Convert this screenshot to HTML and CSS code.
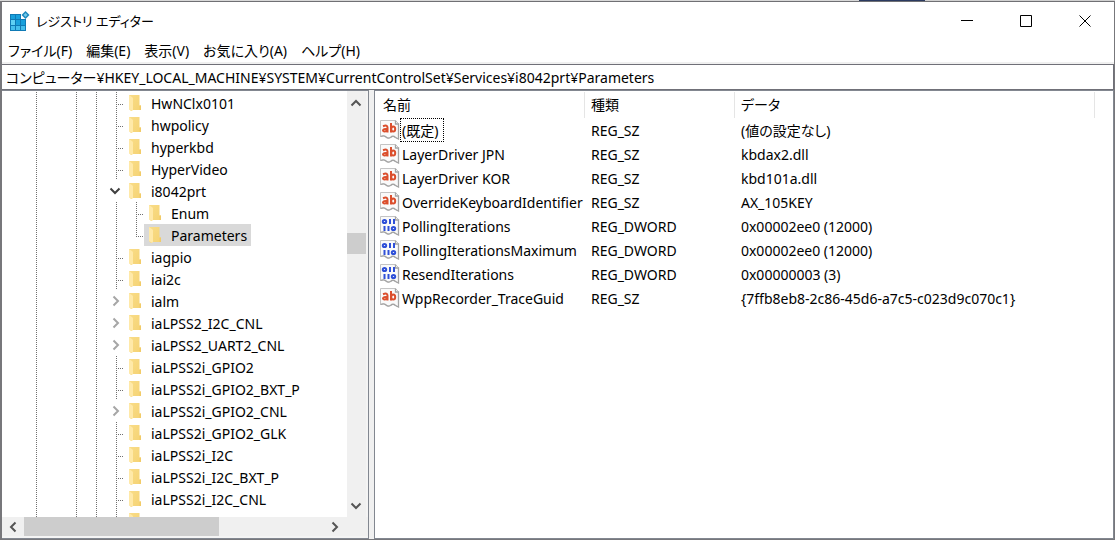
FILE: index.html
```html
<!DOCTYPE html>
<html lang="ja">
<head>
<meta charset="utf-8">
<title>レジストリ エディター</title>
<link rel="stylesheet" href="styles.css">
</head>
<body>
<svg class="defs" aria-hidden="true">
  <defs>
    <linearGradient id="gold" x1="0" y1="0" x2="1" y2="1">
      <stop offset="0" stop-color="#f9dc87"/><stop offset="1" stop-color="#f5d374"/>
    </linearGradient>
    <symbol id="folder" viewBox="0 0 12 16">
      <path d="M0 0H10.500V10.500H12V15H3V16H2L0 14z" fill="url(#gold)"/>
      <path d="M10.500 10.500H12V15H10.500z" fill="#f2cb68"/>
      <path d="M0 0L3.500 2.500Q4 3 4 3.500V15L3 16L0 14z" fill="#ffe9a8"/>
    </symbol>
    <symbol id="page" viewBox="0 0 20 20">
      <path d="M.5 .5H15.500L18.500 3.500V19L15.500 17.500Q13 15 10.500 17.500Q8 19 6 17Q4 15 .5 16.500z" fill="#fafafa" stroke="#c4c4c4"/>
      <path d="M15.500 .5V4H18.500V19L15.500 17.500Q13 15 10.500 17.500Q8 19 6 17Q4 15 .5 16.500" fill="none" stroke="#a4a4a4" stroke-width="1.300"/>
    </symbol>
    <symbol id="string" viewBox="0 0 20 20">
      <use href="#page"/>
      <g fill="none" stroke="#db4f2d" stroke-width="2">
        <path d="M3 6.200Q7.500 4.500 7.500 7.500V12.500M7.500 9Q3 8.500 3 10.500Q3.500 12.500 7.500 10.500"/>
        <path d="M11 3V12.500"/><ellipse cx="13.200" cy="9" rx="2" ry="2.500"/>
      </g>
    </symbol>
    <symbol id="binary" viewBox="0 0 20 20">
      <use href="#page"/>
      <g fill="none" stroke="#2f50d8" stroke-width="2">
        <ellipse cx="4.500" cy="5.500" rx="1.700" ry="1.600"/><path d="M10 3V8M14 3V8M4.500 10V15M8.500 10V15"/>
        <ellipse cx="13.500" cy="12.500" rx="1.700" ry="1.600"/>
      </g>
    </symbol>
    <symbol id="up" viewBox="0 0 12 12"><path d="M1.500 8.500L6 4L10.500 8.500" fill="none" stroke="#555" stroke-width="2"/></symbol>
    <symbol id="down" viewBox="0 0 12 12"><path d="M1.500 3.500L6 8L10.500 3.500" fill="none" stroke="currentColor" stroke-width="2"/></symbol>
    <symbol id="left" viewBox="0 0 12 12"><path d="M8.500 1.500L4 6L8.500 10.500" fill="none" stroke="#555" stroke-width="2"/></symbol>
    <symbol id="right" viewBox="0 0 12 12"><path d="M3.500 1.500L8 6L3.500 10.500" fill="none" stroke="currentColor" stroke-width="2"/></symbol>
  </defs>
</svg>
<main class="window">
  <header class="titlebar">
    <svg class="app-icon" viewBox="0 0 20 20" aria-hidden="true">
      <path d="M0 3H11V8H16V20H0z" fill="#0f7ab5"/>
      <path d="M1 4H5V8H1zM6 4H10V8H6zM6 9H10V14H6zM11 9H15V14H11z" fill="#18a0dc"/>
      <path d="M1 9H5V14H1z" fill="#5fd0f3"/>
      <path d="M1 15H5V19H1zM6 15H10V19H6zM11 15H15V19H11z" fill="#45bfec"/>
      <path d="M15.500 0L19.500 4L15.500 8L11.500 4z" fill="#1b87bd"/>
      <path d="M15.500 2L17.500 4L15.500 6L13.500 4z" fill="#72c9ea"/>
    </svg>
    <h1 class="title">レジストリ エディター</h1>
    <div class="caption-buttons">
      <button class="caption" aria-label="最小化"><svg viewBox="0 0 12 12"><path d="M0 5.500H12"/></svg></button>
      <button class="caption" aria-label="最大化"><svg viewBox="0 0 12 12"><path d="M.5 .5H11.500V11.500H.5z"/></svg></button>
      <button class="caption" aria-label="閉じる"><svg viewBox="0 0 12 12"><path d="M.5 .5L11.500 11.500M11.500 .5L.5 11.500"/></svg></button>
    </div>
  </header>
  <nav class="menubar">
    <button>ファイル(F)</button><button>編集(E)</button><button>表示(V)</button><button>お気に入り(A)</button><button>ヘルプ(H)</button>
  </nav>
  <input class="address" aria-label="アドレス" value="コンピューター¥HKEY_LOCAL_MACHINE¥SYSTEM¥CurrentControlSet¥Services¥i8042prt¥Parameters">
  <div class="panes">
    <section class="tree-pane">
      <div class="tree-main">
        <ul class="tree" id="tree" role="tree" aria-label="キー"></ul>
        <div class="scroll-v">
          <button aria-label="上へ"><svg><use href="#up"/></svg></button>
          <div class="track-v"><div class="thumb-v"></div></div>
          <button aria-label="下へ"><svg><use href="#down"/></svg></button>
        </div>
      </div>
      <div class="scroll-h">
        <button aria-label="左へ"><svg><use href="#left"/></svg></button>
        <div class="track-h"><div class="thumb-h"></div></div>
        <button aria-label="右へ"><svg><use href="#right"/></svg></button>
      </div>
    </section>
    <section class="list-pane">
      <table class="values">
        <colgroup><col class="col-name"><col class="col-type"><col class="col-data"><col></colgroup>
        <thead><tr><th>名前</th><th>種類</th><th>データ</th><td></td></tr></thead>
        <tbody id="values"></tbody>
      </table>
    </section>
  </div>
</main>
<script src="app.js"></script>
</body>
</html>
```
FILE: styles.css
```css
* { box-sizing: border-box; }
body {
  margin: 0;
  height: 100vh;
  padding: 1px 1px 1px 2px;
  background: linear-gradient(90deg, #d8d8d8 77%, #2b3a60 77% 83%, #d0d0d0 83%) top / 100% 1px no-repeat, #77777b;
  color: #000;
  font: 14px/22px "Noto Sans", "Noto Sans CJK JP", sans-serif;
  font-feature-settings: "palt";
  overflow: hidden;
}
button, input { font: inherit; font-feature-settings: inherit; color: inherit; border: 0; padding: 0; background: none; }
.defs { position: absolute; width: 0; height: 0; }
.window {
  height: 100%;
  display: flex;
  flex-direction: column;
  background: #fff;
  border: 1px solid #707074;
  border-width: 1px 0 0 0;
}
.titlebar { display: flex; align-items: center; height: 38px; padding-left: 8px; flex: none; }
.app-icon { width: 20px; height: 20px; margin-right: 6px; }
.title { flex: 1; margin: 0; font: inherit; font-size: 13px; }
.caption-buttons { display: flex; height: 100%; }
.caption { width: 59px; }
.caption svg { display: block; width: 12px; height: 12px; margin: auto; fill: none; stroke: #000; overflow: visible; }
.menubar { display: flex; gap: 14px; height: 24px; padding: 0 6px; border-bottom: 2px solid #f0f0f0; flex: none; }
.address { height: 26px; width: 100%; padding: 0 4px; border: 1px solid #707078; border-left: 0; flex: none; }
.panes { flex: 1; min-height: 0; display: flex; gap: 5px; background: #f0f0f0; }
.tree-pane, .list-pane { border: 1px solid #828790; background: #fff; }
.tree-pane { flex: none; width: 33%; display: flex; flex-direction: column; border-left: 0; }
.tree-main { flex: 1; min-height: 0; display: flex; }
.tree { flex: 1; min-width: 0; margin: 0; padding: 1px 0 0 22px; list-style: none; overflow: hidden; }
.node { display: flex; height: 22px; white-space: nowrap; }
.guide { flex: none; width: 20px; display: flex; }
.line, .branch, .last { background: repeating-linear-gradient(#707070 0 1px, transparent 1px 2px) 12px 0 / 1px 100% no-repeat; }
.branch {
  background:
    repeating-linear-gradient(#707070 0 1px, transparent 1px 2px) 12px 0 / 1px 100% no-repeat,
    repeating-linear-gradient(90deg, #707070 0 1px, transparent 1px 2px) 14px 12px / 7px 1px no-repeat;
}
.last {
  background:
    repeating-linear-gradient(#707070 0 1px, transparent 1px 2px) 12px 0 / 1px 13px no-repeat,
    repeating-linear-gradient(90deg, #707070 0 1px, transparent 1px 2px) 14px 12px / 7px 1px no-repeat;
}
.expander { width: 100%; display: flex; justify-content: flex-end; align-items: center; padding-right: 2px; color: #a6a6a6; }
.expander svg { width: 12px; height: 12px; }
.expander.open { color: #404040; padding-right: 3px; }
.key { display: flex; align-items: center; gap: 10px; padding: 0 4px 0 5px; }
.key span { padding-top: 2px; }
.key svg { width: 12px; height: 16px; }
.selected { background: #d9d9d9; }
.scroll-v { width: 21px; padding-top: 1px; display: flex; flex-direction: column; background: #f0f0f0; border-right: 2px solid #f4f4f4; }
.scroll-v button { height: 22px; flex: none; color: #555; }
.scroll-v svg, .scroll-h svg { display: block; width: 12px; height: 12px; margin: auto; }
.track-v { flex: 1; display: grid; grid-template-rows: 33fr 21px 67fr; }
.thumb-v { grid-row: 2; background: #cdcdcd; }
.scroll-h { display: flex; height: 21px; flex: none; background: #f0f0f0; padding-right: 22px; border-bottom: 2px solid #f4f4f4; }
.scroll-h button { width: 22px; flex: none; color: #555; }
.track-h { flex: 1; }
.thumb-h { width: 65%; height: 100%; background: #cdcdcd; }
.list-pane { flex: 1; min-width: 0; overflow: hidden; }
.values { width: 100%; table-layout: fixed; border-collapse: separate; border-spacing: 0; margin-top: 1px; line-height: 22px; }
.col-name { width: 210px; }
.col-type { width: 150px; }
.col-data { width: 360px; }
.values th { height: 26px; padding: 0 0 0 6px; text-align: left; font-weight: 400; border-right: 1px solid #e5e5e5; }
.values th:first-child { padding-left: 8px; }
.values td { height: 24px; padding: 2px 0 0 6px; white-space: nowrap; }
.values td:first-child { padding: 0 0 0 5px; }
.value-name { display: flex; align-items: center; height: 24px; }
.value-name svg { width: 20px; height: 20px; flex: none; }
.value-name span { padding: 2px 1px 0 2px; }
.value-name .focused { padding: 2px 5px 0 1px; line-height: 20px; border: 1px dotted #000; }
```
FILE: app.js
```js
const keys = [
  ["HwNClx0101", "leaf"], ["hwpolicy", "leaf"], ["hyperkbd", "leaf"], ["HyperVideo", "leaf"],
  ["i8042prt", "open"], ["Enum", "child"], ["Parameters", "lastchild"],
  ["iagpio", "leaf"], ["iai2c", "leaf"], ["ialm", "closed"],
  ["iaLPSS2_I2C_CNL", "closed"], ["iaLPSS2_UART2_CNL", "closed"],
  ["iaLPSS2i_GPIO2", "leaf"], ["iaLPSS2i_GPIO2_BXT_P", "leaf"], ["iaLPSS2i_GPIO2_CNL", "closed"],
  ["iaLPSS2i_GPIO2_GLK", "leaf"], ["iaLPSS2i_I2C", "leaf"], ["iaLPSS2i_I2C_BXT_P", "leaf"],
  ["iaLPSS2i_I2C_CNL", "leaf"], ["", "leaf"]
];
const guide = (cls, inner = "") => `<span class="guide ${cls}">${inner}</span>`;
const own = {
  leaf: guide("branch"),
  open: guide("", '<button class="expander open" aria-label="折りたたむ"><svg><use href="#down"/></svg></button>'),
  closed: guide("", '<button class="expander" aria-label="展開"><svg><use href="#right"/></svg></button>'),
  child: guide("line") + guide("branch"),
  lastchild: guide("line") + guide("last")
};
document.getElementById("tree").innerHTML = keys.map(([name, kind]) =>
  `<li class="node" role="treeitem">${guide("line")}${guide("")}${guide("line")}${guide("line")}${own[kind]}` +
  `<span class="key${name === "Parameters" ? " selected" : ""}"><svg><use href="#folder"/></svg><span>${name}</span></span></li>`
).join("");

const values = [
  ["(既定)", "REG_SZ", "(値の設定なし)"],
  ["LayerDriver JPN", "REG_SZ", "kbdax2.dll"],
  ["LayerDriver KOR", "REG_SZ", "kbd101a.dll"],
  ["OverrideKeyboardIdentifier", "REG_SZ", "AX_105KEY"],
  ["PollingIterations", "REG_DWORD", "0x00002ee0 (12000)"],
  ["PollingIterationsMaximum", "REG_DWORD", "0x00002ee0 (12000)"],
  ["ResendIterations", "REG_DWORD", "0x00000003 (3)"],
  ["WppRecorder_TraceGuid", "REG_SZ", "{7ffb8eb8-2c86-45d6-a7c5-c023d9c070c1}"]
];
document.getElementById("values").innerHTML = values.map(([name, type, data], i) =>
  `<tr><td><div class="value-name"><svg><use href="#${type === "REG_SZ" ? "string" : "binary"}"/></svg>` +
  `<span${i ? "" : ' class="focused"'}>${name}</span></div></td><td>${type}</td><td>${data}</td><td></td></tr>`
).join("");
```
